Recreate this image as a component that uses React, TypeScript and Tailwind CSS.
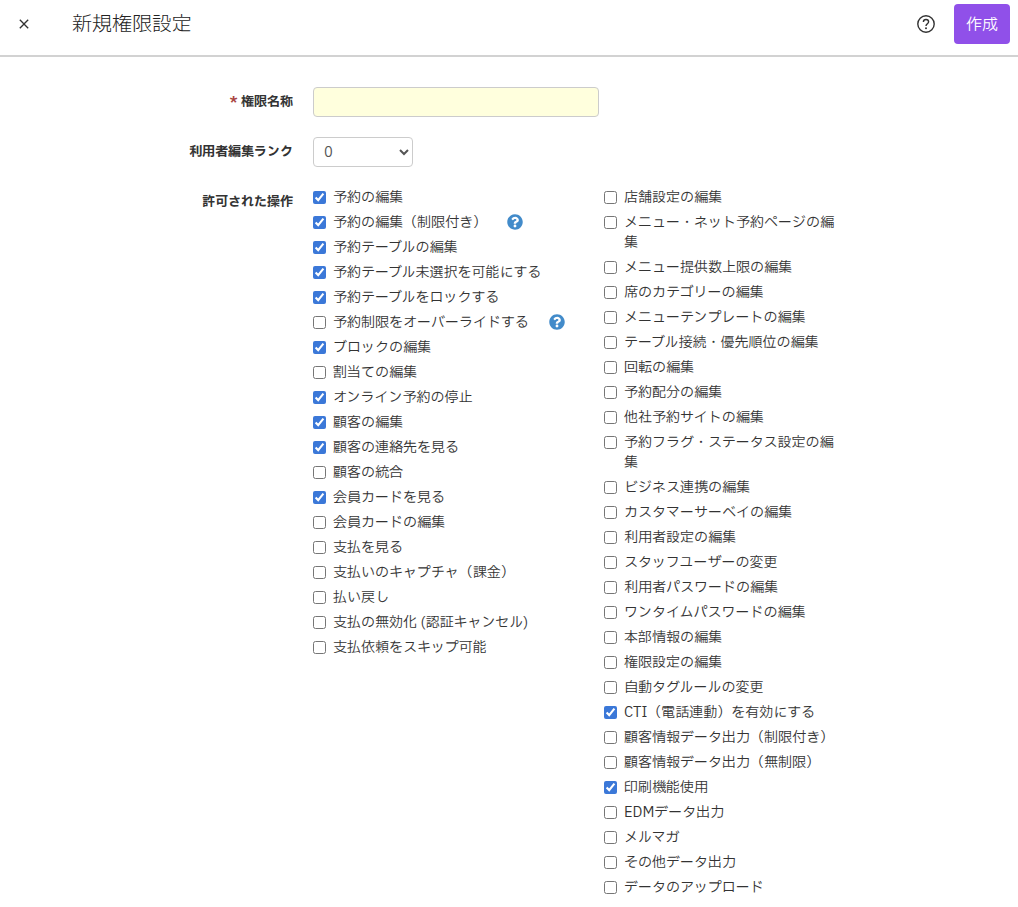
import React, { useState } from 'react';
import { FaQuestionCircle } from 'react-icons/fa';
import { MdClose } from 'react-icons/md';

interface Permission {
  label: string;
  checked?: boolean;
  help?: boolean;
}

const leftPermissions: Permission[] = [
  { label: '予約の編集', checked: true },
  { label: '予約の編集（制限付き）', checked: true, help: true },
  { label: '予約テーブルの編集', checked: true },
  { label: '予約テーブル未選択を可能にする', checked: true },
  { label: '予約テーブルをロックする', checked: true },
  { label: '予約制限をオーバーライドする', help: true },
  { label: 'ブロックの編集', checked: true },
  { label: '割当ての編集' },
  { label: 'オンライン予約の停止', checked: true },
  { label: '顧客の編集', checked: true },
  { label: '顧客の連絡先を見る', checked: true },
  { label: '顧客の統合' },
  { label: '会員カードを見る', checked: true },
  { label: '会員カードの編集' },
  { label: '支払を見る' },
  { label: '支払いのキャプチャ（課金）' },
  { label: '払い戻し' },
  { label: '支払の無効化 (認証キャンセル)' },
  { label: '支払依頼をスキップ可能' },
];

const rightPermissions: Permission[] = [
  { label: '店舗設定の編集' },
  { label: 'メニュー・ネット予約ページの編集' },
  { label: 'メニュー提供数上限の編集' },
  { label: '席のカテゴリーの編集' },
  { label: 'メニューテンプレートの編集' },
  { label: 'テーブル接続・優先順位の編集' },
  { label: '回転の編集' },
  { label: '予約配分の編集' },
  { label: '他社予約サイトの編集' },
  { label: '予約フラグ・ステータス設定の編集' },
  { label: 'ビジネス連携の編集' },
  { label: 'カスタマーサーベイの編集' },
  { label: '利用者設定の編集' },
  { label: 'スタッフユーザーの変更' },
  { label: '利用者パスワードの編集' },
  { label: 'ワンタイムパスワードの編集' },
  { label: '本部情報の編集' },
  { label: '権限設定の編集' },
  { label: '自動タグルールの変更' },
  { label: 'CTI（電話連動）を有効にする', checked: true },
  { label: '顧客情報データ出力（制限付き）' },
  { label: '顧客情報データ出力（無制限）' },
  { label: '印刷機能使用', checked: true },
  { label: 'EDMデータ出力' },
  { label: 'メルマガ' },
  { label: 'その他データ出力' },
  { label: 'データのアップロード' },
];

const HelpIcon: React.FC = () => (
  <svg viewBox="0 0 20 20" className="size-5" fill="none" stroke="currentColor" strokeWidth="1.4">
    <circle cx="10" cy="10" r="8.2" />
    <path d="M7.4 8.1C7.4 6.5 8.4 5.5 10 5.5s2.6 .9 2.6 2.3c0 1.9-2.6 2-2.6 4.2" />
    <circle cx="10" cy="14.2" r="1" fill="currentColor" stroke="none" />
  </svg>
);

const PermissionList: React.FC<{ items: Permission[] }> = ({ items }) => (
  <ul className="flex flex-col gap-[5px] pt-px">
    {items.map((item) => (
      <li key={item.label} className="flex items-start">
        <label className="flex items-start gap-[7px]">
          <input
            type="checkbox"
            defaultChecked={item.checked}
            className="mt-[3px] size-[13px] shrink-0 accent-[#3b78d8]"
          />
          <span>{item.label}</span>
        </label>
        {item.help && (
          <button type="button" aria-label="ヘルプ" className="ml-5 mt-px shrink-0 text-[#428bca]">
            <FaQuestionCircle className="size-4" />
          </button>
        )}
      </li>
    ))}
  </ul>
);

export default function App() {
  const [name, setName] = useState('');
  const [rank, setRank] = useState('0');

  return (
    <form
      className="min-h-screen bg-white font-['IBM_Plex_Sans_JP','Noto_Sans_CJK_JP',sans-serif] text-sm leading-5 text-[#333]"
      onSubmit={(e) => e.preventDefault()}
    >
      {/* Header */}
      <header className="flex h-[57px] items-start border-b-2 border-[#d2d2d2] px-2 pt-1">
        <button type="button" aria-label="閉じる" className="flex h-10 w-8 items-center justify-center">
          <MdClose className="size-4" />
        </button>
        <h1 className="ml-8 text-xl leading-[42px] font-light text-[#222]">新規権限設定</h1>
        <div className="ml-auto flex items-center gap-[18px]">
          <button type="button" aria-label="ヘルプ">
            <HelpIcon />
          </button>
          <button
            type="submit"
            className="h-10 rounded bg-[#9050e9] px-3 pt-0.5 text-base text-white"
          >
            作成
          </button>
        </div>
      </header>

      {/* Form fields */}
      <main className="mx-auto grid max-w-[670px] grid-cols-[119px_1fr] gap-5 pt-[30px] pb-2">
        <label htmlFor="name" className="pt-[5px] text-right text-[13px] font-bold">
          <span className="text-[#a94442]">*</span> 権限名称
        </label>
        <input
          id="name"
          type="text"
          value={name}
          onChange={(e) => setName(e.target.value)}
          className="h-[30px] w-full max-w-[286px] rounded border border-[#ccc] bg-[#ffffdd] px-2"
        />

        <label htmlFor="rank" className="pt-[5px] text-right text-[13px] font-bold">
          利用者編集ランク
        </label>
        <select
          id="rank"
          value={rank}
          onChange={(e) => setRank(e.target.value)}
          className="h-[30px] w-[100px] rounded border border-[#ccc] bg-white px-1.5 text-[#555]"
        >
          <option>0</option>
          <option>1</option>
          <option>2</option>
          <option>3</option>
        </select>

        <div id="permissions" className="pt-[5px] text-right text-[13px] font-bold">
          許可された操作
        </div>
        <div role="group" aria-labelledby="permissions" className="grid grid-cols-[271px_1fr] gap-5">
          <PermissionList items={leftPermissions} />
          <PermissionList items={rightPermissions} />
        </div>
      </main>
    </form>
  );
}
